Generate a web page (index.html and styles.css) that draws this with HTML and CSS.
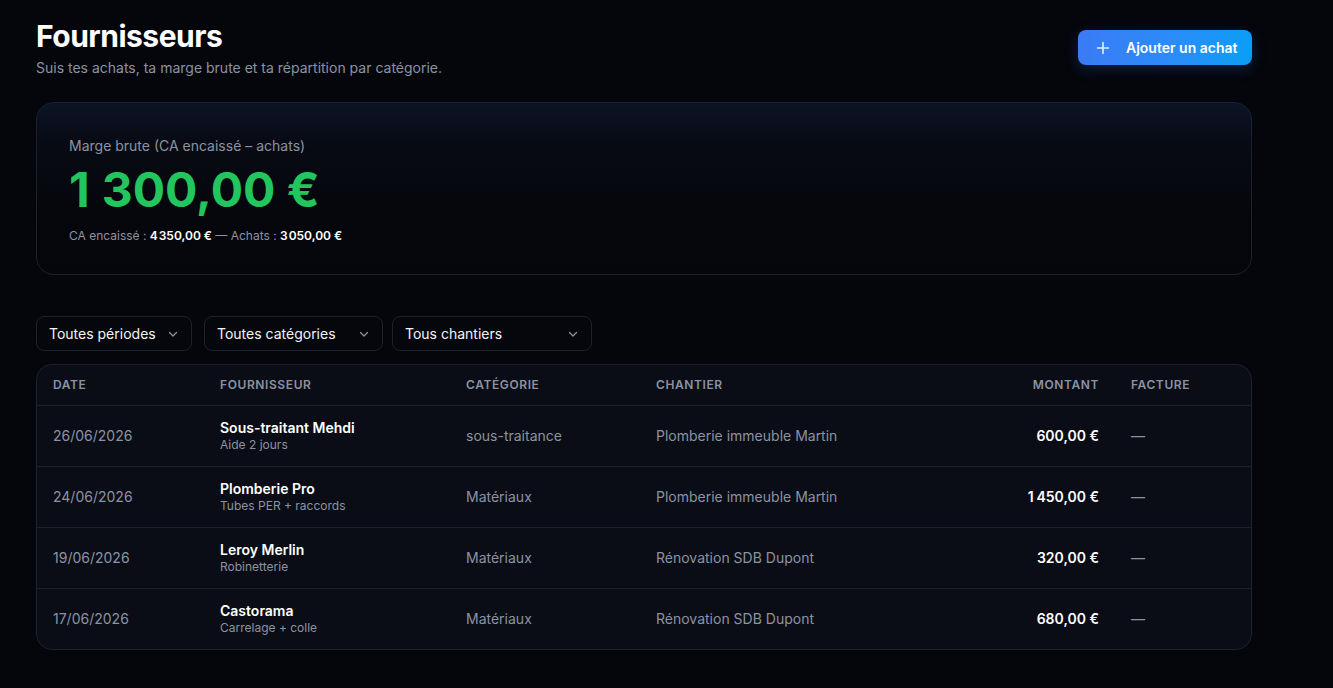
FILE: index.html
```html
<!DOCTYPE html>
<html lang="fr">
<head>
<meta charset="utf-8">
<title>Fournisseurs</title>
<link rel="stylesheet" href="styles.css">
</head>
<body>
<main class="page">
  <header class="top">
    <div class="heading">
      <h1 class="title">Fournisseurs</h1>
      <p class="subtitle">Suis tes achats, ta marge brute et ta répartition par catégorie.</p>
    </div>
    <button class="add-btn" type="button">
      <svg class="plus" width="14" height="14" viewBox="0 0 14 14" aria-hidden="true"><path d="M7 1.5v11M1.5 7h11" stroke="currentColor" stroke-width="1.6" stroke-linecap="round" fill="none"/></svg>
      <span>Ajouter un achat</span>
    </button>
  </header>

  <section class="margin-card">
    <div class="mc-label">Marge brute (CA encaissé – achats)</div>
    <div class="mc-value">1<span class="grp">300,00 €</span></div>
    <div class="mc-sub">CA encaissé : <strong>4<span class="grp">350,00 €</span></strong> — Achats : <strong>3<span class="grp">050,00 €</span></strong></div>
  </section>

  <div class="filters">
    <div class="select w1"><span>Toutes périodes</span><svg class="chev" width="14" height="14" viewBox="0 0 14 14"><path d="M3.5 5.5l3.5 3.5 3.5-3.5" stroke="currentColor" stroke-width="1.3" fill="none" stroke-linecap="round" stroke-linejoin="round"/></svg></div>
    <div class="select w2"><span>Toutes catégories</span><svg class="chev" width="14" height="14" viewBox="0 0 14 14"><path d="M3.5 5.5l3.5 3.5 3.5-3.5" stroke="currentColor" stroke-width="1.3" fill="none" stroke-linecap="round" stroke-linejoin="round"/></svg></div>
    <div class="select w3"><span>Tous chantiers</span><svg class="chev" width="14" height="14" viewBox="0 0 14 14"><path d="M3.5 5.5l3.5 3.5 3.5-3.5" stroke="currentColor" stroke-width="1.3" fill="none" stroke-linecap="round" stroke-linejoin="round"/></svg></div>
  </div>

  <div class="table">
    <div class="row head">
      <div class="cell">Date</div>
      <div class="cell">Fournisseur</div>
      <div class="cell">Catégorie</div>
      <div class="cell">Chantier</div>
      <div class="cell right">Montant</div>
      <div class="cell">Facture</div>
    </div>
    <div class="row">
      <div class="cell muted">26/06/2026</div>
      <div class="cell"><div class="name">Sous-traitant Mehdi</div><div class="desc">Aide 2 jours</div></div>
      <div class="cell muted">sous-traitance</div>
      <div class="cell muted">Plomberie immeuble Martin</div>
      <div class="cell right amount">600,00 €</div>
      <div class="cell dash">—</div>
    </div>
    <div class="row">
      <div class="cell muted">24/06/2026</div>
      <div class="cell"><div class="name">Plomberie Pro</div><div class="desc">Tubes PER + raccords</div></div>
      <div class="cell muted">Matériaux</div>
      <div class="cell muted">Plomberie immeuble Martin</div>
      <div class="cell right amount">1<span class="grp">450,00 €</span></div>
      <div class="cell dash">—</div>
    </div>
    <div class="row">
      <div class="cell muted">19/06/2026</div>
      <div class="cell"><div class="name">Leroy Merlin</div><div class="desc">Robinetterie</div></div>
      <div class="cell muted">Matériaux</div>
      <div class="cell muted">Rénovation SDB Dupont</div>
      <div class="cell right amount">320,00 €</div>
      <div class="cell dash">—</div>
    </div>
    <div class="row">
      <div class="cell muted">17/06/2026</div>
      <div class="cell"><div class="name">Castorama</div><div class="desc">Carrelage + colle</div></div>
      <div class="cell muted">Matériaux</div>
      <div class="cell muted">Rénovation SDB Dupont</div>
      <div class="cell right amount">680,00 €</div>
      <div class="cell dash">—</div>
    </div>
  </div>
</main>
</body>
</html>
```

FILE: styles.css
```css
* { box-sizing: border-box; }
html, body { margin: 0; padding: 0; }
body {
  background: #05060b;
  color: #f1f5f9;
  font-family: Inter, "Noto Sans", sans-serif;
  -webkit-font-smoothing: antialiased;
}
.page {
  width: 1216px;
  margin-left: 36px;
  padding-top: 18px;
}
.grp {
  margin-left: 0.2em;
}
.mc-value .grp { margin-left: 0.25em; }
.mc-sub .grp { margin-left: 0.08em; }
.top {
  display: flex;
  justify-content: space-between;
  align-items: flex-start;
}
.title {
  margin: 0;
  font-size: 30px;
  line-height: 36px;
  font-weight: 700;
  letter-spacing: -0.5px;
  color: #ffffff;
}
.subtitle {
  margin: 4px 0 0;
  font-size: 14px;
  line-height: 20px;
  color: #8b93a3;
}
.add-btn {
  margin-top: 12px;
  height: 35px;
  width: 174px;
  border: 0;
  border-radius: 8px;
  background: linear-gradient(90deg, #3b7bf6 0%, #2b8cf8 55%, #0a9ef6 100%);
  color: #fff;
  font-family: inherit;
  font-size: 14px;
  font-weight: 600;
  white-space: nowrap;
  display: flex;
  align-items: center;
  gap: 16px;
  padding: 0 0 0 18px;
  box-shadow: 0 4px 14px rgba(37, 110, 240, 0.25);
}
.plus { color: #e6efff; flex: none; }

.margin-card {
  margin-top: 24px;
  height: 173px;
  border: 1px solid #1c2130;
  border-radius: 18px;
  background: linear-gradient(180deg, #0b1426 0%, #080b14 22%, #06070d 60%, #05060b 100%);
  padding: 34px 32px 0;
}
.mc-label {
  font-size: 14px;
  line-height: 18px;
  color: #8b93a3;
}
.mc-value {
  margin-top: 7px;
  font-size: 48px;
  line-height: 56px;
  font-weight: 700;
  color: #22c55e;
}
.mc-sub {
  margin-top: 10px;
  font-size: 12px;
  line-height: 16px;
  color: #8b93a3;
}
.mc-sub strong { color: #ffffff; font-weight: 600; }

.filters {
  margin-top: 41px;
  display: flex;
  gap: 12px;
}
.select {
  height: 35px;
  border: 1px solid #1c2130;
  border-radius: 8px;
  background: #06070d;
  display: flex;
  align-items: center;
  justify-content: space-between;
  padding: 0 11px 0 12px;
  font-size: 14px;
  color: #f1f5f9;
}
.select.w1 { width: 156px; }
.select.w2 { width: 179px; }
.select.w3 { width: 200px; margin-left: -3px; }
.chev { color: #8b93a3; flex: none; }

.table {
  margin-top: 13px;
  border: 1px solid #1c2130;
  border-radius: 16px;
  background: #0a0d15;
  overflow: hidden;
}
.row {
  display: grid;
  grid-template-columns: 167px 246px 190px 315px 160px 136px;
  align-items: center;
  height: 61px;
  border-top: 1px solid #1c2130;
}
.row.head {
  height: 40px;
  border-top: 0;
}
.cell {
  padding: 0 16px;
  font-size: 14px;
  line-height: 20px;
  white-space: nowrap;
}
.head .cell {
  font-size: 12px;
  font-weight: 600;
  letter-spacing: 0.6px;
  text-transform: uppercase;
  color: #8b93a3;
}
.right { text-align: right; }
.muted { color: #8b93a3; }
.name {
  font-size: 14px;
  font-weight: 600;
  line-height: 18px;
  color: #ffffff;
}
.desc {
  font-size: 12px;
  line-height: 16px;
  color: #8b93a3;
}
.amount { font-weight: 600; color: #ffffff; }
.dash { color: #8b93a3; }
```
